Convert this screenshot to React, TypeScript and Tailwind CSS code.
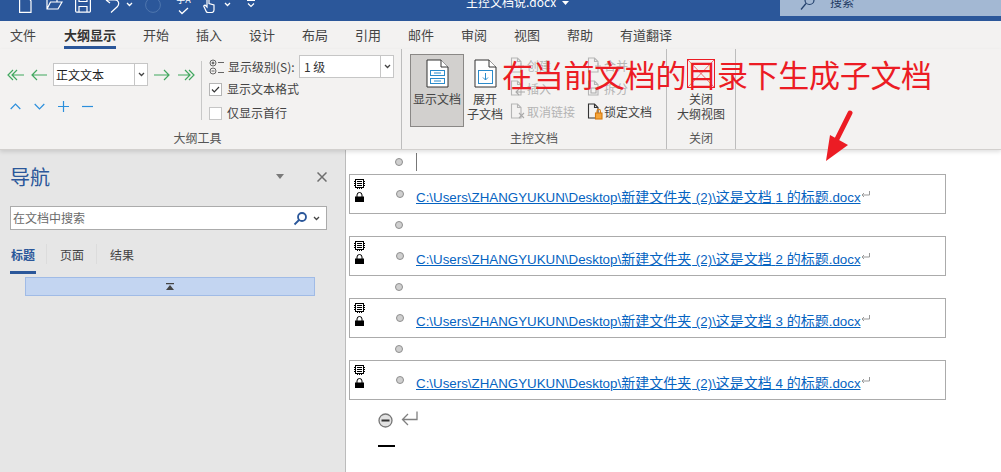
import React from 'react';

const tabs = [
  { name: '文件', w: 'w-[54px]' },
  { name: '大纲显示', w: 'w-[79px]', active: true },
  { name: '开始', w: 'w-[53px]' },
  { name: '插入', w: 'w-[53px]' },
  { name: '设计', w: 'w-[53px]' },
  { name: '布局', w: 'w-[53px]' },
  { name: '引用', w: 'w-[53px]' },
  { name: '邮件', w: 'w-[53px]' },
  { name: '审阅', w: 'w-[53px]' },
  { name: '视图', w: 'w-[53px]' },
  { name: '帮助', w: 'w-[53px]' },
  { name: '有道翻译', w: 'w-[80px]' },
];

const docs = [1, 2, 3, 4];

function Caret({ color = '#444' }: { color?: string }) {
  return (
    <svg width="7" height="5" viewBox="0 0 7 5" fill="none" stroke={color} strokeWidth="1.3">
      <path d="M1 1l2.5 2.5L6 1" />
    </svg>
  );
}

function Arrow({ dir, double }: { dir: 'left' | 'right'; double?: boolean }) {
  const w = double ? 17 : 16;
  return (
    <svg width={w} height="12" viewBox={`0 0 ${w} 12`} fill="none" stroke="#41a85f" strokeWidth="1.2" className={dir === 'right' ? '-scale-x-100' : ''}>
      {double ? (
        <path d="M6 1L1 6l5 5M10 1L5 6l5 5M5 6h12" />
      ) : (
        <path d="M6 1L1 6l5 5M1 6h15" />
      )}
    </svg>
  );
}

function SmallDocIcon({ dim, lock, mark }: { dim?: boolean; lock?: boolean; mark?: 'x' | 'in' | 'plus' | 'split' }) {
  const c = dim ? '#b5b5b5' : '#333';
  return (
    <svg width="16" height="17" viewBox="0 0 16 17" fill="none" stroke={c} strokeWidth="1.1">
      <path d="M1.5 1h6l3.5 3.5V15h-9.5z" />
      <path d="M7.5 1v3.5H11" />
      {mark === 'x' && <path d="M9 10l5 5M14 10l-5 5" stroke="#aaa" />}
      {mark === 'in' && <path d="M15 12H6M9 9l-3 3 3 3" stroke="#aaa" />}
      {mark === 'plus' && <path d="M8 9h6M11 6v6" stroke="#bbb" />}
      {mark === 'split' && <path d="M4 8h5v5H4z" stroke="#aaa" />}
      {lock && (
        <g>
          <rect x="8.5" y="10" width="6.5" height="6" fill="#f6a53a" stroke="#d67a10" />
          <path d="M10 10V8a1.7 1.7 0 013.4 0v2" stroke="#d67a10" />
        </g>
      )}
    </svg>
  );
}

function BigDoc({ children }: { children: React.ReactNode }) {
  return (
    <svg width="23" height="29" viewBox="0 0 23 29" fill="none">
      <path d="M1 1h14l7 7v20H1z" fill="#fff" stroke="#333" />
      <path d="M15 1v7h7" fill="#fff" stroke="#333" />
      {children}
    </svg>
  );
}

function SmallCmd({ label, dim, lock, mark }: { label: string; dim?: boolean; lock?: boolean; mark?: 'x' | 'in' | 'plus' | 'split' }) {
  return (
    <div className={`flex h-[23px] items-center gap-[1px] text-[12px] ${dim ? 'text-[#b4b4b4]' : 'text-[#444]'}`}>
      <SmallDocIcon dim={dim} lock={lock} mark={mark} />
      <span>{label}</span>
    </div>
  );
}

function GroupLabel({ children, className = '' }: { children: React.ReactNode; className?: string }) {
  return <div className={`flex h-[20px] items-center justify-center text-[12px] text-[#555] ${className}`}>{children}</div>;
}

function OutlineDot() {
  return <span className="h-[8px] w-[8px] shrink-0 rounded-full border border-[#8f8f8f] bg-[#cfcfcf]" />;
}

function SubDocIcons() {
  return (
    <div className="flex w-[46px] shrink-0 flex-col gap-[3px] self-start pl-[4px] pt-[4px]">
      <svg width="11" height="10" viewBox="0 0 11 10" fill="none" stroke="#000" shapeRendering="crispEdges">
        <path d="M1.5 .5h8v8h-8z" />
        <path d="M3 2.5h5M3 4.5h5M3 6.5h5M0 2.5h1.5M0 4.5h1.5M0 6.5h1.5M9.5 2.5H11M9.5 4.5H11M9.5 6.5H11M3.5 8.5v1.5M5.5 8.5v1.5M7.5 8.5v1.5" />
      </svg>
      <svg width="9" height="10" viewBox="0 0 9 10" className="ml-[1px]">
        <path d="M2 5V3a2.5 2.5 0 015 0v2" fill="none" stroke="#000" />
        <rect y="4.5" width="9" height="5.5" fill="#000" />
      </svg>
    </div>
  );
}

export default function App() {
  return (
    <div className="relative h-[472px] w-[1001px] overflow-hidden bg-white font-['Noto_Sans_CJK_SC',sans-serif]">
      {/* Title bar */}
      <div className="flex h-[21px] items-start overflow-hidden bg-[#2b579a]">
        <svg width="13" height="13" viewBox="0 0 13 13" fill="none" stroke="#fff" strokeWidth="1.2" className="ml-[19px]">
          <path d="M.6-3v15.4h11.4V1L9-3" />
        </svg>
        <svg width="17" height="10" viewBox="0 0 17 10" fill="none" stroke="#fff" strokeWidth="1.2" className="ml-[14px]">
          <path d="M1-2v11h11l4-7H4.5L1 9M11 2V-2" />
        </svg>
        <svg width="16" height="13" viewBox="0 0 16 13" fill="none" stroke="#fff" strokeWidth="1.2" className="ml-[12px]">
          <path d="M.6-3v14a1.2 1.2 0 001.2 1.2h12.4a1.2 1.2 0 001.2-1.2V-3M4 12V6.5h8V12M4-3v4.5h8V-3" />
        </svg>
        <svg width="16" height="13" viewBox="0 0 16 13" fill="none" stroke="#fff" strokeWidth="1.2" className="ml-[14px]">
          <path d="M1 0h9c4 0 4.5 4 2.5 6.5L6 12.5M1 0l3-3M1 0l4 3" />
        </svg>
        <div className="ml-[5px] mt-[2px]"><Caret color="#fff" /></div>
        <svg width="16" height="13" viewBox="0 0 16 13" fill="none" stroke="#4f76ae" strokeWidth="1" className="ml-[12px]">
          <circle cx="8" cy="5" r="7.4" />
        </svg>
        <div className="ml-[15px] flex w-[15px] flex-col items-center">
          <span className="-mt-[5px] whitespace-nowrap text-[9px] leading-[10px] text-white">字A</span>
          <svg width="11" height="8" viewBox="0 0 11 8" fill="none" stroke="#fff" strokeWidth="1.3" className="mt-[2px]">
            <path d="M1 3.5l3 3L10 1" />
          </svg>
        </div>
        <svg width="12" height="13" viewBox="0 0 12 13" fill="none" stroke="#fff" strokeWidth="1.2" className="ml-[12px]">
          <path d="M4-3v10L2 5 .7 6 3 11a2 2 0 002 1.5h3.5a2.5 2.5 0 002.5-2.5V5L6 3.5V-3" />
        </svg>
        <div className="ml-[9px] mt-[2px]"><Caret color="#fff" /></div>
        <svg width="8" height="8" viewBox="0 0 8 8" fill="none" stroke="#fff" className="ml-[16px]">
          <path d="M0 .5h8" />
          <path d="M1 3.5l3 3 3-3" strokeWidth="1.2" />
        </svg>
        <span className="ml-[211px] -mt-[7px] shrink-0 whitespace-nowrap text-[12px] leading-[18px] text-white">主控文档说.docx</span>
        <svg width="7" height="4" viewBox="0 0 7 4" className="ml-[6px] mt-[1px]"><path d="M0 0h7L3.5 4z" fill="#fff" /></svg>
        <div className="ml-auto flex h-[16px] w-[221px] shrink-0 items-start bg-[#a3b8d3]">
          <svg width="15" height="11" viewBox="0 0 15 11" fill="none" stroke="#22406c" strokeWidth="1.2" className="ml-[20px]">
            <circle cx="9.5" cy="0" r="4.5" />
            <path d="M6 3.5L1 9.5" />
          </svg>
          <span className="-mt-[7px] ml-[15px] text-[12px] leading-[18px] text-[#1f3b63]">搜索</span>
        </div>
      </div>

      {/* Tabs */}
      <div className="flex h-[28px] bg-[#f3f2f1] pl-[10px] text-[13px] text-[#444]">
        {tabs.map((t) => (
          <div key={t.name} className={t.w}>
            <div className={`inline-block h-[28px] pt-[4px] leading-[20px] ${t.active ? 'border-b-[3px] border-[#2b579a] font-bold text-[#333]' : ''}`}>
              {t.name}
            </div>
          </div>
        ))}
      </div>

      {/* Ribbon */}
      <div className="relative z-10 flex h-[101px] border-b border-[#d2d0ce] bg-[#f3f2f1] shadow-[0_2px_4px_rgba(0,0,0,0.12)]">
        {/* Outline tools */}
        <div className="flex w-[402px] shrink-0 flex-col border-r border-[#bdbdbd]">
          <div className="flex h-[79px]">
            <div className="flex w-[201px] shrink-0 flex-col pl-[7px] pt-[14px]">
              <div className="flex h-[23px] items-center">
                <Arrow dir="left" double />
                <span className="ml-[7px]"><Arrow dir="left" /></span>
                <div className="ml-[6px] flex h-[23px] w-[95px] items-center border border-[#c6c6c6] bg-white text-[12px] text-[#222]">
                  <span className="flex-1 pl-[2px]">正文文本</span>
                  <span className="flex h-full w-[13px] items-center justify-center border-l border-[#c6c6c6]"><Caret /></span>
                </div>
                <span className="ml-[6px]"><Arrow dir="right" /></span>
                <span className="ml-[8px]"><Arrow dir="right" double /></span>
              </div>
              <div className="ml-[3px] mt-[15px] flex items-center gap-[13px]">
                <svg width="11" height="7" viewBox="0 0 11 7" fill="none" stroke="#2b8fdc" strokeWidth="1.2"><path d="M.7 6l4.8-4.8L10.3 6" /></svg>
                <svg width="11" height="7" viewBox="0 0 11 7" fill="none" stroke="#2b8fdc" strokeWidth="1.2"><path d="M.7 1l4.8 4.8L10.3 1" /></svg>
                <svg width="11" height="11" viewBox="0 0 11 11" fill="none" stroke="#2b8fdc" strokeWidth="1.2"><path d="M0 5.5h11M5.5 0v11" /></svg>
                <svg width="11" height="3" viewBox="0 0 11 3" fill="none" stroke="#2b8fdc" strokeWidth="1.2"><path d="M0 1.5h11" /></svg>
              </div>
            </div>
            <div className="mt-[12px] h-[59px] w-px bg-[#c8c8c8]" />
            <div className="flex flex-1 flex-col pl-[7px] pt-[6px] text-[12px] text-[#444]">
              <div className="flex h-[23px] items-center">
                <svg width="16" height="16" viewBox="0 0 16 16" fill="none" stroke="#666">
                  <circle cx="4" cy="4" r="3" />
                  <circle cx="4" cy="4" r="1" fill="#666" />
                  <path d="M9 3.5h6" />
                  <circle cx="4" cy="12" r="3" />
                  <path d="M2.5 12h3M9 13.5h6" />
                </svg>
                <span className="ml-[3px] w-[71px]">显示级别(S):</span>
                <div className="flex h-[23px] w-[95px] items-center border border-[#c6c6c6] bg-white text-[#333]">
                  <span className="flex-1 pl-[4px]">1 级</span>
                  <span className="flex h-full w-[13px] items-center justify-center border-l border-[#c6c6c6]"><Caret /></span>
                </div>
              </div>
              <div className="-mt-[1px] flex h-[24px] items-center gap-[5px]">
                <span className="flex h-[13px] w-[13px] items-center justify-center border border-[#b5b5b5] bg-white">
                  <svg width="9" height="7" viewBox="0 0 9 7" fill="none" stroke="#333" strokeWidth="1.2"><path d="M1 3.5l2.3 2.3L8 1" /></svg>
                </span>
                <span>显示文本格式</span>
              </div>
              <div className="flex h-[24px] items-center gap-[5px]">
                <span className="h-[13px] w-[13px] border border-[#c6c6c6] bg-white" />
                <span>仅显示首行</span>
              </div>
            </div>
          </div>
          <GroupLabel className="pr-[6px]">大纲工具</GroupLabel>
        </div>

        {/* Master document */}
        <div className="flex w-[265px] shrink-0 flex-col border-r border-[#bdbdbd]">
          <div className="flex h-[79px] pl-[8px] pt-[5px]">
            <div className="flex h-[73px] w-[54px] flex-col items-center border border-[#8a8886] bg-[#d2d0ce] pt-[4px] text-[12px] leading-[15px] text-[#444]">
              <BigDoc>
                <rect x="4.5" y="11.5" width="14" height="5" stroke="#2b8bcb" />
                <rect x="4.5" y="19.5" width="14" height="5" stroke="#2b8bcb" />
                <path d="M8 14h7M8 22h7" stroke="#2b8bcb" />
              </BigDoc>
              <span className="mt-[3px]">显示文档</span>
            </div>
            <div className="ml-[2px] flex w-[38px] flex-col items-center pt-[5px] text-[12px] leading-[15px] text-[#444]">
              <BigDoc>
                <rect x="4.5" y="11.5" width="14" height="13" stroke="#2b8bcb" />
                <path d="M11.5 14v7M9 18.5l2.5 2.5 2.5-2.5" stroke="#2b8bcb" />
              </BigDoc>
              <span className="mt-[3px]">展开</span>
              <span>子文档</span>
            </div>
            <div className="ml-[6px] flex w-[77px] flex-col">
              <SmallCmd label="创建" dim mark="plus" />
              <SmallCmd label="插入" dim mark="in" />
              <SmallCmd label="取消链接" dim mark="x" />
            </div>
            <div className="flex flex-col">
              <SmallCmd label="合并" dim mark="plus" />
              <SmallCmd label="拆分" dim mark="split" />
              <SmallCmd label="锁定文档" lock />
            </div>
          </div>
          <GroupLabel>主控文档</GroupLabel>
        </div>

        {/* Close */}
        <div className="flex w-[69px] shrink-0 flex-col border-r border-[#bdbdbd]">
          <div className="flex h-[79px] flex-col items-center pt-[10px] text-[12px] leading-[15px] text-[#444]">
            <svg width="28" height="29" viewBox="0 0 28 29" fill="none" stroke="#ec1c24">
              <rect x=".5" y=".5" width="27" height="28" />
              <path d="M1 1l26 27M27 1L1 28" strokeOpacity=".6" />
            </svg>
            <span className="mt-[3px]">关闭</span>
            <span>大纲视图</span>
          </div>
          <GroupLabel>关闭</GroupLabel>
        </div>
      </div>

      {/* Body */}
      <div className="flex h-[322px]">
        {/* Navigation pane */}
        <div className="w-[346px] shrink-0 border-r border-[#bcbcbc] bg-[#e6e6e6] pl-[10px] pt-[12px]">
          <div className="flex h-[30px] items-center pr-[18px]">
            <span className="flex-1 text-[20px] text-[#2b579a]">导航</span>
            <svg width="10" height="6" viewBox="0 0 10 6" className="mr-[32px]"><path d="M1 0h8L5 5z" fill="#7a7a7a" /></svg>
            <svg width="10" height="10" viewBox="0 0 10 10" fill="none" stroke="#6e6e6e" strokeWidth="1.5"><path d="M.5.5l9 9M9.5.5l-9 9" /></svg>
          </div>
          <div className="mt-[14px] flex h-[24px] w-[317px] items-center border border-[#ababab] bg-white pl-[2px] text-[12px] text-[#6a6a6a]">
            <span className="flex-1">在文档中搜索</span>
            <svg width="15" height="15" viewBox="0 0 15 15" fill="none" stroke="#2b579a" strokeWidth="1.8">
              <circle cx="9" cy="6" r="4" />
              <path d="M6 9l-4.5 4.5" />
            </svg>
            <span className="ml-[5px] mr-[6px]"><Caret /></span>
          </div>
          <div className="mt-[14px] flex h-[30px] text-[12px] text-[#444]">
            <div className="h-[30px] w-[26px] border-b-[3px] border-[#2b579a] pl-[1px] pt-[2px] font-bold text-[#2b579a]">标题</div>
            <div className="ml-[10px] h-[20px] w-px bg-[#dcdcdc]" />
            <div className="ml-[13px] w-[25px] pt-[2px]">页面</div>
            <div className="ml-[11px] h-[20px] w-px bg-[#dcdcdc]" />
            <div className="ml-[13px] pt-[2px]">结果</div>
          </div>
          <div className="ml-[15px] mt-[3px] flex h-[19px] w-[290px] items-center justify-center border border-[#a0bbe6] bg-[#c3d5f1]">
            <svg width="8" height="7" viewBox="0 0 8 7" fill="#444"><path d="M0 0h8v1.2H0zM4 2l4 5H0z" /></svg>
          </div>
        </div>

        {/* Document */}
        <div className="flex-1 bg-white pl-[3px]">
          <div className="flex h-[24px] items-center pl-[46px]">
            <OutlineDot />
            <span className="ml-[13px] h-[18px] w-px bg-[#777]" />
          </div>
          {docs.map((n, i) => (
            <React.Fragment key={n}>
              {i > 0 && (
                <div className="flex h-[22px] items-center pl-[46px]">
                  <OutlineDot />
                </div>
              )}
              <div className="flex h-[40px] w-[597px] items-center border border-[#ababab] font-['Liberation_Sans','Noto_Sans_CJK_SC',sans-serif]">
                <SubDocIcons />
                <OutlineDot />
                <span className="ml-[12px] mt-[7px] whitespace-nowrap text-[14px] leading-[16px] text-[#0563c1] underline">
                  <span className="text-[13.33px]">C:\Users\ZHANGYUKUN\Desktop\</span>新建文件夹<span className="ml-[1px] text-[13.33px]"> (2)\</span>这是文档<span className="text-[13.33px]"> {n} </span>的标题<span className="text-[13.33px]">.docx</span>
                </span>
                <svg width="9" height="8" viewBox="0 0 9 8" fill="none" stroke="#999" className="mt-[1px]"><path d="M8.5 0v4H1M3 2L1 4l2 2" /></svg>
              </div>
            </React.Fragment>
          ))}
          <div className="flex items-center pl-[29px] pt-[13px]">
            <svg width="15" height="15" viewBox="0 0 15 15">
              <circle cx="7.5" cy="7.5" r="6.5" fill="#e2e2e2" stroke="#777" strokeWidth="1.3" />
              <path d="M3.5 7.5h8" stroke="#333" strokeWidth="2" />
            </svg>
            <svg width="17" height="15" viewBox="0 0 17 15" fill="none" stroke="#808080" strokeWidth="1.3" className="-mt-[4px] ml-[8px]">
              <path d="M16 .5v8H2M7 3L1.5 8.5 7 14" />
            </svg>
          </div>
          <div className="ml-[29px] mt-[17px] h-[2px] w-[17px] bg-black" />
        </div>
      </div>

      {/* Annotation */}
      <div className="absolute left-[502px] top-[52px] z-20 whitespace-nowrap text-[31px] leading-[44px] font-normal tracking-[-0.3px] text-[#ec1c24]">
        在当前文档的目录下生成子文档
      </div>
      <svg width="40" height="60" viewBox="0 0 40 60" className="absolute left-[820px] top-[106px] z-20">
        <path d="M30 7L15 37" stroke="#ec1c24" strokeWidth="5" strokeLinecap="round" />
        <path d="M6 55L10 29 28 39z" fill="#ec1c24" />
      </svg>
    </div>
  );
}
